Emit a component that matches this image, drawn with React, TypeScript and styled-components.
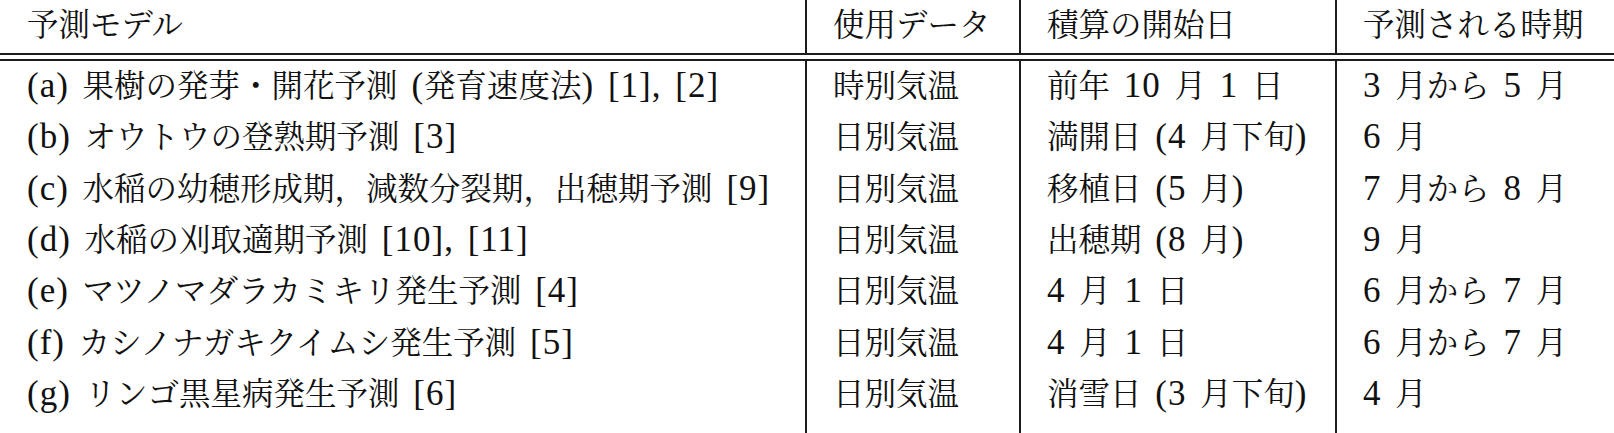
import React from "react";
import styled, { createGlobalStyle } from "styled-components";

const Global = createGlobalStyle`
  html, body {
    margin: 0;
    padding: 0;
    background: #ffffff;
    overflow: hidden;
  }
  #root {
    width: 1614px;
    height: 433px;
  }
`;

const Table = styled.div`
  display: grid;
  grid-template-columns: 805px 214px 316px 1fr;
  grid-template-rows: 53px 8px repeat(6, 51.33px) 1fr;
  width: 1614px;
  height: 433px;
  color: #111111;
`;

const Cell = styled.div<{ $col: number }>`
  box-sizing: border-box;
  border-left: ${(p) => (p.$col > 0 ? "2px solid #1c1c1c" : "none")};
  padding-left: ${(p) => (p.$col > 0 ? "26px" : "27px")};
  line-height: 46px;
  white-space: nowrap;
  overflow: hidden;
`;

const DoubleRule = styled.div`
  grid-column: 1 / -1;
  box-sizing: border-box;
  height: 8px;
  border-top: 2px solid #1c1c1c;
  border-bottom: 2px solid #1c1c1c;
`;

const Lat = styled.span`
  font-family: "Liberation Serif", "Times New Roman", serif;
  font-size: 35px;
  letter-spacing: 1px;
  word-spacing: 4px;
`;

const Jp = styled.span`
  font-family: "Noto Serif CJK JP", "Noto Sans CJK JP", serif;
  font-size: 31.5px;
`;

const Mixed: React.FC<{ text: string }> = ({ text }) => {
  const parts = text.split(/([\x20-\x7E]+)/);
  return (
    <>
      {parts.map((p, i) =>
        p === "" ? null : /^[\x20-\x7E]+$/.test(p) ? (
          <Lat key={i}>{p}</Lat>
        ) : (
          <Jp key={i}>{p}</Jp>
        )
      )}
    </>
  );
};

const header = ["予測モデル", "使用データ", "積算の開始日", "予測される時期"];

const rows: string[][] = [
  ["(a) 果樹の発芽・開花予測 (発育速度法) [1], [2]", "時別気温", "前年 10 月 1 日", "3 月から 5 月"],
  ["(b) オウトウの登熟期予測 [3]", "日別気温", "満開日 (4 月下旬)", "6 月"],
  ["(c) 水稲の幼穂形成期，減数分裂期，出穂期予測 [9]", "日別気温", "移植日 (5 月)", "7 月から 8 月"],
  ["(d) 水稲の刈取適期予測 [10], [11]", "日別気温", "出穂期 (8 月)", "9 月"],
  ["(e) マツノマダラカミキリ発生予測 [4]", "日別気温", "4 月 1 日", "6 月から 7 月"],
  ["(f) カシノナガキクイムシ発生予測 [5]", "日別気温", "4 月 1 日", "6 月から 7 月"],
  ["(g) リンゴ黒星病発生予測 [6]", "日別気温", "消雪日 (3 月下旬)", "4 月"],
];

export default function App() {
  return (
    <>
      <Global />
      <Table>
        {header.map((h, c) => (
          <Cell key={`h${c}`} $col={c}>
            <Mixed text={h} />
          </Cell>
        ))}
        <DoubleRule />
        {rows.map((r, ri) =>
          r.map((t, c) => (
            <Cell key={`${ri}-${c}`} $col={c}>
              <Mixed text={t} />
            </Cell>
          ))
        )}
      </Table>
    </>
  );
}
